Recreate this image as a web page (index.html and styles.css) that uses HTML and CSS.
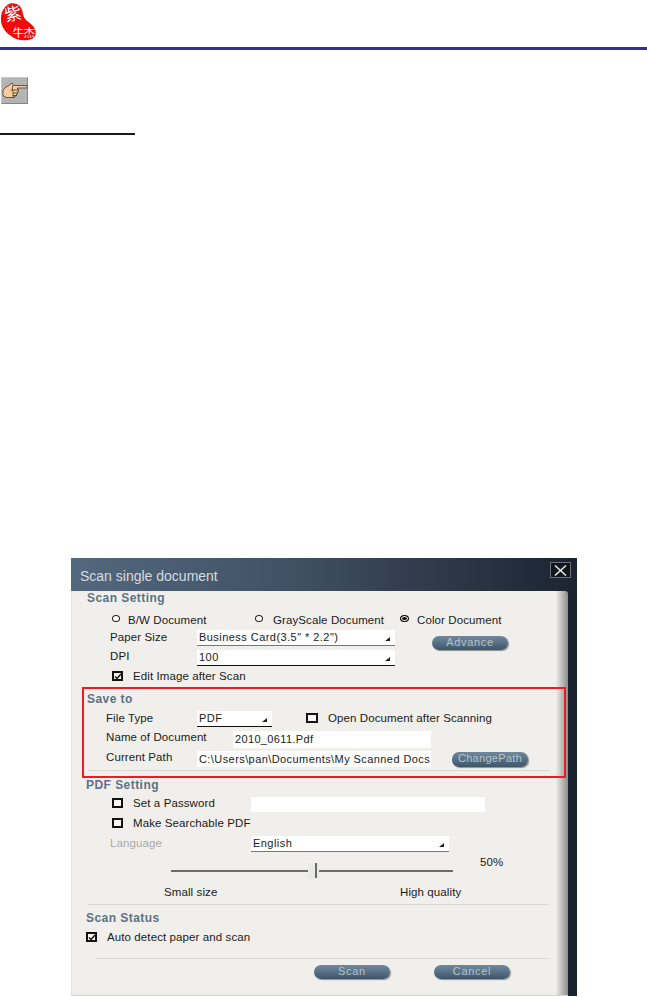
FILE: index.html
```html
<!DOCTYPE html>
<html lang="en">
<head>
<meta charset="utf-8">
<title>Scan single document</title>
<link rel="stylesheet" href="styles.css">
</head>
<body>
<header class="page-head">
  <svg class="logo" width="38" height="44" viewBox="0 0 38 44">
    <path d="M10 3.500C16 2 22 5 23 14C24 20 28 21 33 26C37 31 36.500 37 32 39C26 41 17 41 11 36C5 32 0.500 26 1 18C1 11 5 6 10 3.500Z" fill="#f00a0a"/>
    <text class="logo-big" x="4" y="20" transform="rotate(-12 13 13)">紫</text>
    <text class="logo-small" x="12.500" y="37">牛</text>
    <text class="logo-small" x="23.500" y="36.500">杰</text>
  </svg>
</header>
<div class="hand-box">
  <svg width="25" height="25" viewBox="0 0 25 25">
    <path d="M1 12L4 9L7 7.500L10 5L11.500 7.500H25V10H15.500V11.500H16.500V13.500H15.500V16H14.500V18H12.500V19.500H4L1 17.500Z" fill="#f8cd9a" stroke="#4a3a2a" stroke-width=".8"/>
    <path d="M10.500 7.500V12M8.500 12H15.500M11 12V19.500M11 15H15.500M11 17.500H14" fill="none" stroke="#4a3a2a" stroke-width=".8"/>
  </svg>
</div>
<div class="rule"></div>

<section class="dialog">
  <div class="title-bar">
    <span class="title">Scan single document</span>
    <span class="close">
      <svg width="13" height="11" viewBox="0 0 13 11"><path d="M1 .5L12 10.500M12 .5L1 10.500" stroke="#e8e8e8" stroke-width="1.500"/></svg>
    </span>
  </div>
  <div class="body">
    <div class="panel">
      <h2 class="heading h-scan">Scan Setting</h2>
      <div class="row radios">
        <span class="radio"></span><span class="lbl w-bw">B/W Document</span>
        <span class="radio"></span><span class="lbl w-gray">GrayScale Document</span>
        <span class="radio on"></span><span class="lbl">Color Document</span>
      </div>
      <div class="row paper">
        <span class="lbl w-87">Paper Size</span>
        <span class="select s-198 under-gray">Business Card(3.5" * 2.2")<i class="arrow"></i></span>
        <span class="btn b-adv">Advance</span>
      </div>
      <div class="row dpi">
        <span class="lbl w-87">DPI</span>
        <span class="select s-198 under-black">100<i class="arrow"></i></span>
      </div>
      <div class="row edit">
        <span class="check checked"><svg width="8" height="7" viewBox="0 0 8 7"><path d="M1 3.500L3 5.500L7 1" fill="none" stroke="#111" stroke-width="1.500"/></svg></span>
        <span class="lbl">Edit Image after Scan</span>
      </div>

      <div class="save-box">
        <h2 class="heading h-save">Save to</h2>
        <div class="row ftype">
          <span class="lbl w-91">File Type</span>
          <span class="select s-75 under-black">PDF<i class="arrow"></i></span>
          <span class="check c-open"></span>
          <span class="lbl">Open Document after Scanning</span>
        </div>
        <div class="row name">
          <span class="lbl w-127">Name of Document</span>
          <span class="field f-198">2010_0611.Pdf</span>
        </div>
        <div class="row path">
          <span class="lbl w-91">Current Path</span>
          <span class="field f-234">C:\Users\pan\Documents\My Scanned Docs</span>
          <span class="btn b-path">ChangePath</span>
        </div>
        <div class="sep s-box"></div>
      </div>

      <h2 class="heading h-pdf">PDF Setting</h2>
      <div class="row pass">
        <span class="check"></span>
        <span class="lbl w-118">Set a Password</span>
        <span class="field f-pass"></span>
      </div>
      <div class="row search">
        <span class="check"></span>
        <span class="lbl">Make Searchable PDF</span>
      </div>
      <div class="row lang">
        <span class="lbl muted w-141">Language</span>
        <span class="select s-198 under-gray">English<i class="arrow"></i></span>
      </div>
      <div class="row slider-row">
        <div class="slider"><span class="thumb"></span></div>
        <span class="lbl pct">50%</span>
      </div>
      <div class="row ends">
        <span class="lbl w-236">Small size</span>
        <span class="lbl">High quality</span>
      </div>
      <div class="sep s-a"></div>
      <h2 class="heading h-status">Scan Status</h2>
      <div class="row auto">
        <span class="check checked"><svg width="8" height="7" viewBox="0 0 8 7"><path d="M1 3.500L3 5.500L7 1" fill="none" stroke="#111" stroke-width="1.500"/></svg></span>
        <span class="lbl">Auto detect paper and scan</span>
      </div>
      <div class="sep s-b"></div>
      <div class="row actions">
        <span class="btn b-act">Scan</span>
        <span class="btn b-act">Cancel</span>
      </div>
    </div>
  </div>
</section>
</body>
</html>
```
FILE: styles.css
```css
* { box-sizing: border-box; }
html, body { margin: 0; padding: 0; background: #fff; }
body {
  width: 647px;
  height: 997px;
  overflow: hidden;
  font: 11px/14px "Liberation Sans", Arial, sans-serif;
  color: #1a1a1a;
}
.page-head { height: 50px; border-bottom: 3px solid #2e3192; position: relative; }
.logo { display: block; margin-left: 0; }
.logo-big { font: 400 17px "Noto Sans CJK SC", sans-serif; fill: #fff; }
.logo-small { font: 400 11.500px "Noto Sans CJK SC", sans-serif; fill: #fff; }
.hand-box {
  width: 27px; height: 27px;
  margin: 27px 0 0 1px;
  background: #b4b4b4;
  border: 1px solid;
  border-color: #c8c8c8 #858585 #858585 #c8c8c8;
  display: flex; align-items: center; justify-content: center;
}
.rule { width: 135px; height: 2px; margin-top: 29px; background: #1f1a1a; }

.dialog {
  width: 506px; height: 438px;
  margin: 423px 0 0 71px;
  background: #1b2230;
  display: flex; flex-direction: column;
}
.title-bar {
  height: 33px; flex: none;
  background: linear-gradient(90deg, #53687e 0%, #3f5063 45%, #333f50 65%, #1c2431 100%);
  display: flex; justify-content: space-between;
  padding: 4px 6px 0 9px;
}
.title { font-size: 14px; line-height: 28px; color: #d8dce0; }
.close {
  width: 21px; height: 16px;
  background: #12161d; border: 1px solid #6c7278;
  display: flex; align-items: center; justify-content: center;
}
.body { flex: 1; display: flex; }
.panel {
  width: 497px; height: 405px;
  background: linear-gradient(90deg, #d9dae0 0, #f1efeb 1px, #f1efeb 97.5%, #8d8d8a 100%);
  border-bottom: 1px solid #cfd2d8;
  border-top-right-radius: 3px;
}

.heading {
  margin: 0;
  font-size: 12px; line-height: 14px; font-weight: 700;
  letter-spacing: .45px; color: #5b7287;
}
.h-scan { padding-left: 16px; }
.h-save { padding-left: 3px; margin-top: 3px; }
.h-pdf { padding-left: 15px; margin-top: 0; }
.h-status { padding-left: 15px; margin-top: 6px; }

.row { display: flex; align-items: center; }
.lbl { font-size: 11.500px; letter-spacing: .1px; white-space: nowrap; flex: none; }
.muted { color: #a8a8a8; }

.radio {
  width: 8px; height: 7px; flex: none;
  border: 1px solid #222; border-radius: 50%; background: #fff;
  margin-top: -3px;
  margin-right: 8px;
}
.radio.on { width: 9px; background: #111; box-shadow: inset 0 0 0 1px #fff; border-color: #111; }
.radios { height: 15px; margin-top: 7px; padding-left: 41px; }
.w-bw { width: 127px; }
.w-gray { width: 127px; margin-left: 2px; }

.paper { height: 20px; margin-top: 3px; padding-left: 39px; align-items: flex-start; }
.dpi { height: 15px; padding-left: 39px; }
.dpi .lbl { margin-top: -3px; }
.w-87 { width: 87px; }
.w-91 { width: 91px; }
.w-127 { width: 127px; }
.w-118 { width: 118px; }
.w-141 { width: 141px; }
.w-236 { width: 236px; }

.select {
  height: 16px; flex: none; position: relative;
  background: #fff; padding-left: 2px;
  line-height: 15px; letter-spacing: .45px; white-space: nowrap;
}
.s-198 { width: 198px; }
.s-75 { width: 75px; }
.under-gray { border-bottom: 1px solid #777; }
.under-black { border-bottom: 1px solid #111; }
.arrow {
  position: absolute; right: 5px; bottom: 4px;
  width: 0; height: 0;
  border-left: 5px solid transparent;
  border-bottom: 4px solid #222;
}

.btn {
  flex: none; height: 14px; border-radius: 7px;
  background: linear-gradient(180deg, #71889b 0%, #5b7387 45%, #3f5468 100%);
  box-shadow: 1px 1px 1px #8b8f92;
  color: #b6c3cc; text-align: center; line-height: 13px; letter-spacing: .7px;
}
.b-adv { width: 76px; margin: 6px 0 0 37px; }
.b-path { width: 76px; height: 15px; margin-left: 21px; letter-spacing: .3px; }
.b-act { width: 76px; }

.check {
  width: 11px; height: 10px; flex: none;
  border: 2px solid #111; background: #f8f8f6;
  display: flex; align-items: center; justify-content: center;
}
.check svg { flex: none; }
.edit { height: 16px; margin-top: 3px; padding-left: 41px; }
.edit .lbl { margin-left: 10px; }

.save-box {
  width: 484px; height: 91px;
  margin: 3px 0 0 11px;
  border: 2px solid #ed1c24;
}
.ftype { height: 16px; margin-top: 5px; padding-left: 22px; }
.ftype .lbl { margin-top: -2px; }
.c-open { width: 12px; margin-left: 34px; margin-right: 10px; margin-top: -2px; }
.name { height: 17px; margin-top: 4px; padding-left: 22px; }
.name .lbl { margin-top: -6px; }
.path { height: 16px; margin-top: 3px; padding-left: 22px; }
.path .lbl { margin-top: -4px; }
.field {
  display: block; height: 100%; flex: none;
  background: #fff; padding-left: 2px; line-height: 17px; white-space: nowrap;
}
.f-198 { width: 198px; letter-spacing: .35px; }
.f-234 { width: 234px; letter-spacing: .42px; }
.f-pass { width: 234px; height: 15px; align-self: flex-end; }

.sep { height: 1px; background: #d8d8d4; }
.s-box { width: 461px; margin: 3px 0 0 4px; }
.s-a { width: 461px; margin: 5px 0 0 17px; }
.s-b { width: 453px; margin: 14px 0 0 25px; }

.pass { height: 16px; margin-top: 4px; padding-left: 41px; }
.pass .check, .pass .lbl { margin-top: -2px; }
.pass .check + .lbl, .search .check + .lbl { margin-left: 10px; }
.search { height: 14px; margin-top: 4px; padding-left: 41px; }
.lang { height: 16px; margin-top: 6px; padding-left: 39px; }
.lang .lbl { margin-top: -2px; }

.slider-row { height: 18px; margin-top: 10px; padding-left: 100px; align-items: flex-start; }
.slider { width: 282px; height: 2px; margin-top: 8px; background: #6d6d6a; position: relative; flex: none; }
.thumb {
  position: absolute; left: 137px; top: -7px;
  width: 11px; height: 16px;
  background: #e9e9e6;
}
.thumb::after {
  content: ""; position: absolute; left: 7px; top: 0;
  width: 2px; height: 15px; background: #6a6a68;
}
.pct { margin: -7px 0 0 27px; }

.ends { height: 14px; margin-top: 5px; padding-left: 93px; }

.auto { height: 14px; margin-top: 5px; padding-left: 15px; }
.auto .lbl { margin-left: 10px; }
.actions { height: 14px; margin-top: 6px; padding-left: 243px; gap: 44px; }
```
